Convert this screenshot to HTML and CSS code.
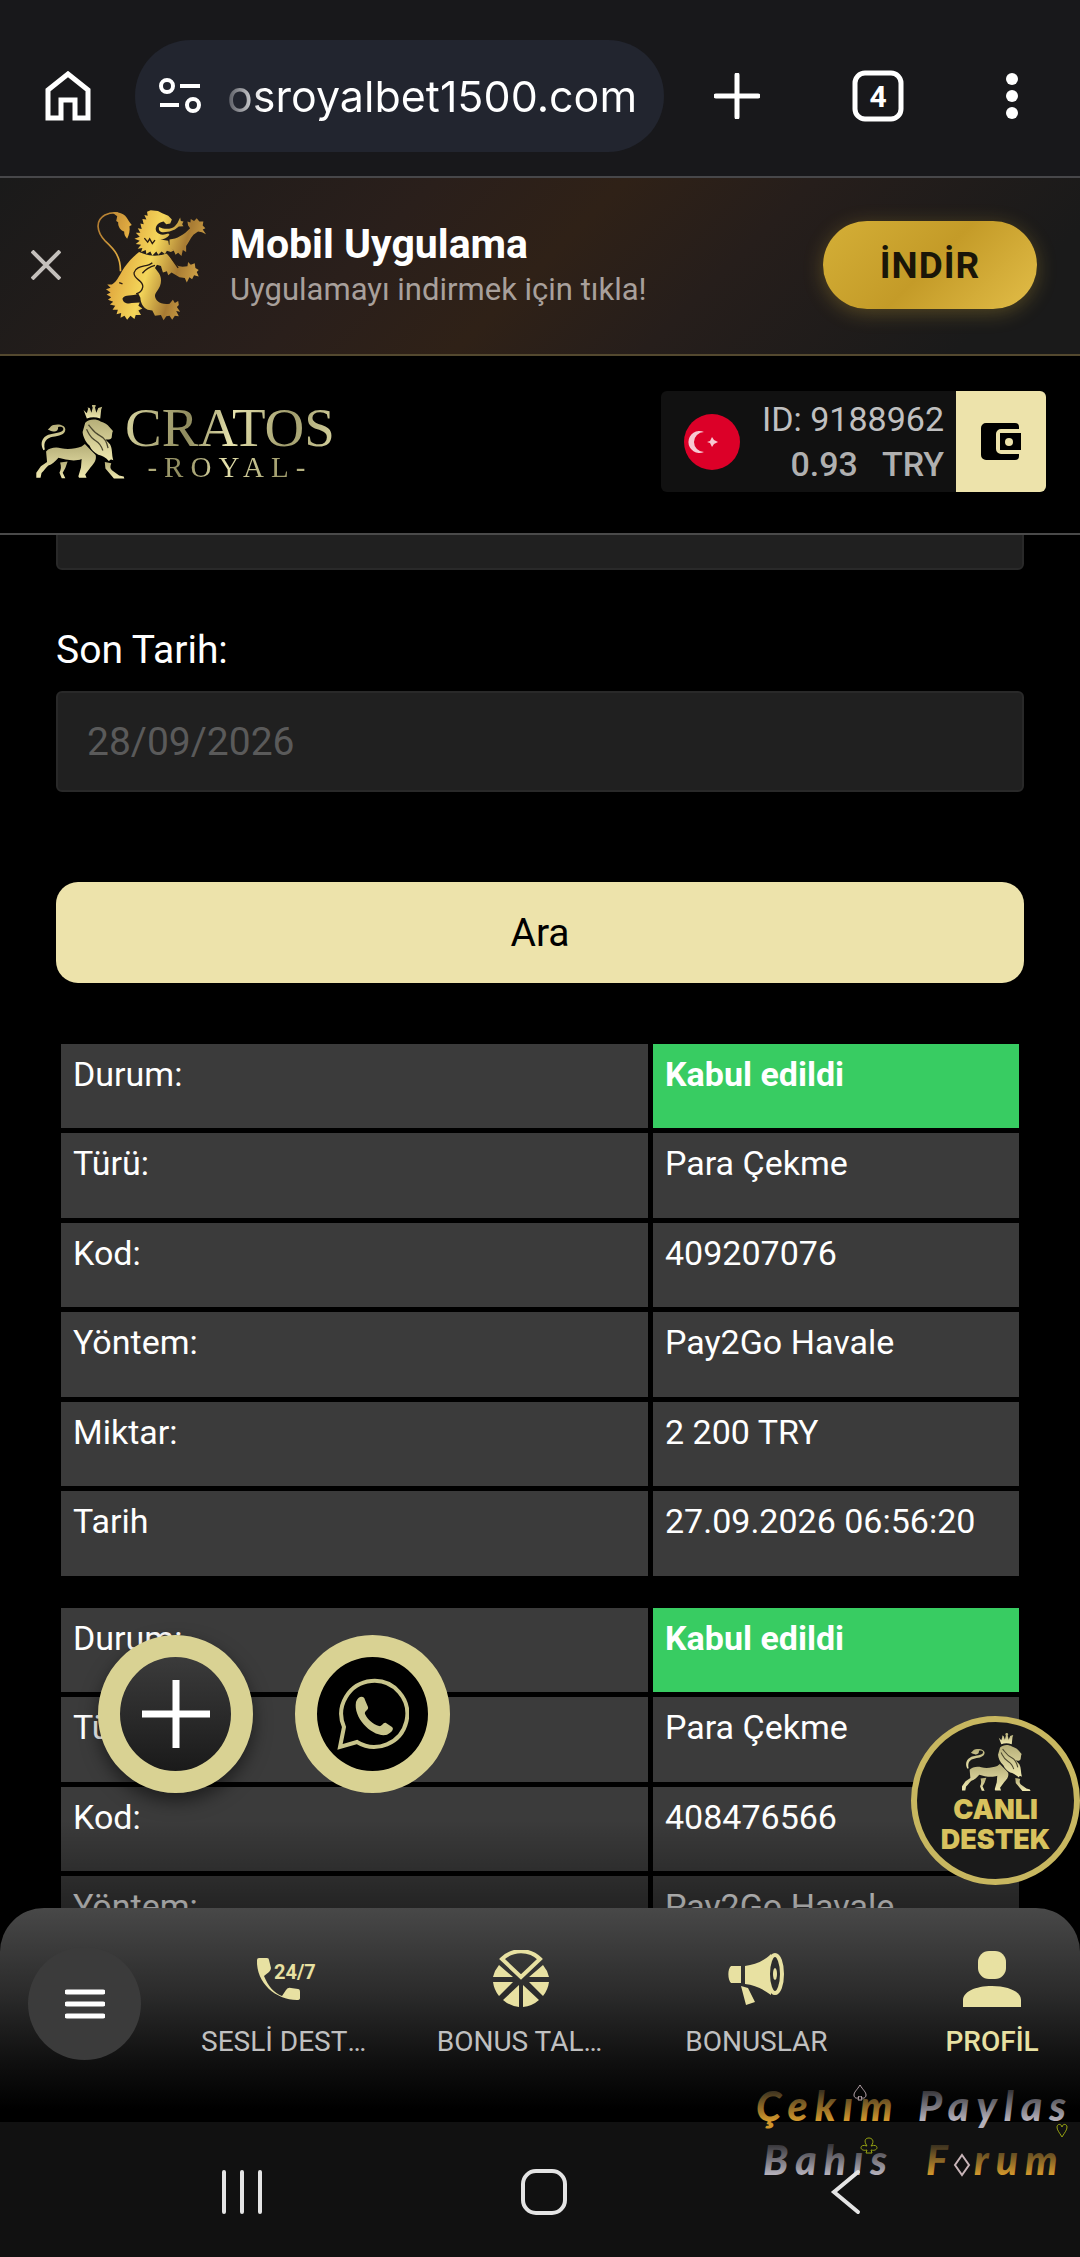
FILE: index.html
```html
<!DOCTYPE html>
<html lang="tr">
<head>
    <meta charset="UTF-8">
    <meta name="viewport" content="width=device-width, initial-scale=1.0">
    <title>Cratos Royal</title>
    <link rel="stylesheet" href="styles.css">
</head>
<body>

<!-- shared drawings -->
<svg width="0" height="0" class="defs" aria-hidden="true">
    <defs>
        <linearGradient id="gold" gradientUnits="userSpaceOnUse" x1="20" y1="60" x2="350" y2="160">
            <stop offset="0" stop-color="#b07a30"/>
            <stop offset="0.3" stop-color="#e3ae42"/>
            <stop offset="0.55" stop-color="#f4d65a"/>
            <stop offset="0.8" stop-color="#a87b33"/>
            <stop offset="1" stop-color="#d3a548"/>
        </linearGradient>
        <linearGradient id="cream" x1="0" y1="0" x2="0" y2="1">
            <stop offset="0" stop-color="#b5ae78"/>
            <stop offset="1" stop-color="#f0e9b0"/>
        </linearGradient>
        <linearGradient id="wmGold" x1="0" y1="0" x2="0" y2="1">
            <stop offset="0.2" stop-color="#3a3120"/>
            <stop offset="0.8" stop-color="#d0962c"/>
        </linearGradient>
        <linearGradient id="wmSilver" x1="0" y1="0" x2="0" y2="1">
            <stop offset="0.2" stop-color="#37363a"/>
            <stop offset="0.8" stop-color="#b4b0ba"/>
        </linearGradient>
    </defs>
    <symbol id="walkingLion" viewBox="14 22 276 226">
        <path d="M163 37l10 10 4-14-2-4 7 2 5 14 4-16c-4-5-2-10 3-11 6 1 8 6 4 11l4 16 6-14 5-2 7-2-3 8-3 28c-14-5-28-5-41 0z"/>
        <path d="M168 76c12-12 33-13 47-4 12 4 22 9 27 17l11 12-2 6-2 15c-4 7-12 6-19 5l14 15c8 14 5 31 10 49-8-6-12 0-13 3-11-13-22-17-33-20-14-7-21-15-27-28-14-14-20-30-21-42z"/>
        <path d="M40 160c-9-15-8-34 9-44 15-9 40-6 51-17 4-9-5-13-15-10 1 10-6 15-14 14-7 0-13-4-18-6 7-4 9-13 18-14 15-4 34-1 36 13 0 17-21 21-38 23-20 4-30 15-25 39z"/>
        <path d="M48 164c10-12 31-14 46-10 22 5 45 1 63-5l10-8c13 15 25 24 33 34 3 13-2 23-16 38l-16 22 4 10h-23l-2-5 8-27 2-26c-13 6-32 5-49 2l-22-6c-11 13-20 20-31 24-8 6-12 15-21 23l-3 15H18v-16l14-20 19-13z"/>
        <path d="M91 198l23-3-7 20-8 14 8 17H96l-7-17c5-10 6-18 2-31zM228 196l20 4c-4 10-4 15 2 22l22 16 14 3 2 6h-32l-26-31z"/>
        <path d="M172 96c8 15 10 25 28 35 12 7 18 17 22 30M178 82c12 14 16 25 36 34 16 7 20 21 24 38" fill="none" stroke="#4b472f" stroke-width="4"/>
    </symbol>
</svg>

<header class="browser-bar">
    <button class="icon-button" aria-label="Ana sayfa">
        <svg width="46" height="50" viewBox="0 0 46 50"><path d="M3 19L23 3l20 16v28H30V29H16v18H3z" fill="none" stroke="#fff" stroke-width="5"/></svg>
    </button>
    <button class="url-pill">
        <svg width="42" height="38" viewBox="0 0 42 38" fill="none" stroke="#fff" stroke-width="4"><circle cx="8" cy="9" r="6"/><path d="M21 9h20M1 28h19"/><circle cx="34" cy="28" r="6"/></svg>
        <span class="url-text">osroyalbet1500.com</span>
    </button>
    <div class="browser-actions">
        <button class="icon-button" aria-label="Yeni sekme">
            <svg width="46" height="46" viewBox="0 0 46 46"><path d="M23 2v42M2 23h42" stroke="#fff" stroke-width="5" stroke-linecap="round"/></svg>
        </button>
        <button class="icon-button" aria-label="Sekmeler">
            <svg width="52" height="52" viewBox="0 0 52 52"><rect x="3" y="3" width="46" height="46" rx="10" fill="none" stroke="#fff" stroke-width="5"/><text class="tab-count" x="26" y="37" text-anchor="middle">4</text></svg>
        </button>
        <button class="icon-button menu-dots" aria-label="Menü">
            <svg width="12" height="46" viewBox="0 0 12 46" fill="#fff"><circle cx="6" cy="6" r="6"/><circle cx="6" cy="23" r="6"/><circle cx="6" cy="40" r="6"/></svg>
        </button>
    </div>
</header>

<section class="app-banner">
    <button class="icon-button" aria-label="Kapat">
        <svg width="30" height="30" viewBox="0 0 30 30"><path d="M1 1l28 28M29 1L1 29" stroke="#c4c0bc" stroke-width="4"/></svg>
    </button>
    <svg class="banner-lion" viewBox="15 22 338 338" fill="url(#gold)">
        <!-- tail -->
        <path d="M92 210C92 165 74 145 47 120 18 90 16 56 45 40 58 34 70 32 84 34" fill="none" stroke="url(#gold)" stroke-width="5"/>
        <path d="M68 33C82 30 96 34 106 42 114 50 118 62 126 70L119 74C121 88 118 100 112 112 106 104 103 100 103 90 92 86 84 76 85 62L79 58 82 44z"/>
        <!-- mane and head -->
        <path d="M172 30L183 26 205 28 218 35 236 42 247 54 242 66 230 68 222 60C205 62 194 76 200 90 206 100 222 102 236 96L240 100C234 110 222 114 212 114L236 118 238 130 248 132 246 142 256 146 244 152 232 148 226 158 216 150 206 160 200 150 188 162 182 150 170 158 168 146 154 152 158 140 144 142 154 130 138 128 150 118 134 112 150 106 138 94 152 94 144 80 156 82 152 66 162 68 158 52 170 54 164 40 174 42z"/>
        <path d="M208 76C224 84 244 84 256 74L264 64 272 48 274 58 282 60 278 68 282 74 268 75 256 84 240 90 222 92C212 92 206 86 208 76z"/>
        <!-- upper arm -->
        <path d="M240 114C262 112 284 100 302 80L296 72 294 60 303 63 304 52 314 58 322 50 330 60 342 60 340 72 348 80 340 84 350 98 338 92 326 90 312 100C302 112 296 126 290 134L290 152 280 146 276 164 266 154 258 160 252 146 240 140z"/>
        <!-- trunk, lower arm and legs -->
        <path d="M148 152C176 165 206 166 230 156 244 166 250 182 262 192 272 198 284 196 294 195L296 182 304 190 316 186 318 200 328 206 322 212 328 226 314 222 308 234 300 228 292 244 286 230 270 228 246 214 236 222 232 210 220 214 214 194 202 190 196 200 208 216C218 232 216 252 202 270 194 280 194 288 202 298 212 308 226 310 240 308L250 296 256 306 266 300 268 312 262 318 272 332 260 330 268 346 256 344 248 356 240 344 230 346 222 358 214 342 196 344 188 328 174 326C160 320 152 304 152 290L146 278C128 286 104 280 98 292 98 304 112 310 126 306L150 304 146 314 158 322 146 328 154 342 138 342 134 354 122 344 112 356 104 344 92 350 94 336 80 340 84 326 68 326 76 314 60 310 70 302 54 296 64 288 50 280 62 274 48 264 62 260 52 250 66 250C84 240 92 214 104 198 118 178 130 166 148 152z"/>
        <path d="M188 184c-14 14-48 6-55 30-3 22 30 22 26 44-2 12-12 18-20 20M196 192c-16 4-30 14-38 24M238 160l28 40M164 110l10 12 6-10 8 14 8-10M88 244l10 4" fill="none" stroke="#2a1c12" stroke-width="4"/>
    </svg>
    <div class="banner-text">
        <strong>Mobil Uygulama</strong>
        <span>Uygulamayı indirmek için tıkla!</span>
    </div>
    <button class="download-button">İNDİR</button>
</section>

<section class="site-header">
    <a href="#" class="logo">
        <svg class="logo-lion" fill="url(#cream)"><use href="#walkingLion"/></svg>
        <span class="logo-text">
            <span class="logo-name">CRATOS</span>
            <span class="logo-sub">-ROYAL-</span>
        </span>
    </a>
    <div class="account">
        <svg width="56" height="56" viewBox="0 0 56 56"><circle cx="28" cy="28" r="28" fill="#dc0028"/><path d="M20 18a11 11 0 1 0 0 20 10 10 0 1 1 0-20z" fill="#f7c9d2"/><path d="M28 23l2 3 4 2-4 2-2 3-2-4-3-1 3-1z" fill="#f7c9d2"/></svg>
        <div class="account-info">
            <span>ID: 9188962</span>
            <span class="balance"><span>0.93</span><span>TRY</span></span>
        </div>
        <button class="wallet" aria-label="Cüzdan">
            <svg width="40" height="38" viewBox="0 0 40 38"><path d="M5 0h29a4 4 0 0 1 4 4v2H20a5 5 0 0 0-5 5v15a5 5 0 0 0 5 5h18v2a4 4 0 0 1-4 4H5a5 5 0 0 1-5-5V5a5 5 0 0 1 5-5z"/><path d="M19 10h21v17H19z"/><circle cx="28" cy="19" r="4" fill="#ede3ab"/></svg>
        </button>
    </div>
</section>

<main class="content">
    <form class="filter">
        <input type="text" class="first-field" aria-label="Başlangıç Tarihi">
        <label for="endDate">Son Tarih:</label>
        <input type="text" id="endDate" value="28/09/2026">
        <button type="button">Ara</button>
    </form>

    <table class="transaction">
        <tr><td>Durum:</td><td class="accepted">Kabul edildi</td></tr>
        <tr><td>Türü:</td><td>Para Çekme</td></tr>
        <tr><td>Kod:</td><td>409207076</td></tr>
        <tr><td>Yöntem:</td><td>Pay2Go Havale</td></tr>
        <tr><td>Miktar:</td><td>2 200 TRY</td></tr>
        <tr><td>Tarih</td><td>27.09.2026 06:56:20</td></tr>
    </table>

    <table class="transaction">
        <tr><td>Durum:</td><td class="accepted">Kabul edildi</td></tr>
        <tr><td>Türü:</td><td>Para Çekme</td></tr>
        <tr><td>Kod:</td><td>408476566</td></tr>
        <tr><td>Yöntem:</td><td>Pay2Go Havale</td></tr>
    </table>

    <div class="fade"></div>

    <div class="floating">
        <button class="fab fab-plus" aria-label="Ekle">
            <svg width="68" height="68" viewBox="0 0 68 68"><path d="M34 0v68M0 34h68" stroke="#fff" stroke-width="7"/></svg>
        </button>
        <button class="fab fab-whatsapp" aria-label="WhatsApp">
            <svg width="72" height="72" viewBox="0 0 72 72"><path d="M3 69l4-20a33 33 0 1 1 13 15z" fill="none" stroke="#c9c58c" stroke-width="4"/><path d="M19 24c2-6 8-7 9-2l3 7c1 3-4 4-3 7 3 6 8 10 14 12 3 1 4-4 7-3l6 4c3 2-2 7-6 8C35 59 16 40 19 24z" fill="#c9c58c"/></svg>
        </button>
    </div>

    <button class="live-support">
        <svg class="support-lion" fill="url(#cream)"><use href="#walkingLion"/></svg>
        <span>CANLI</span>
        <span>DESTEK</span>
    </button>
</main>

<nav class="tab-bar">
    <button class="menu-button" aria-label="Menü">
        <svg width="40" height="30" viewBox="0 0 40 30"><path d="M2 3h36M2 15h36M2 27h36" stroke="#fff" stroke-width="5" stroke-linecap="round"/></svg>
    </button>
    <div class="tabs">
        <a href="#">
            <svg width="66" height="58" viewBox="-4 0 66 58" fill="#e8e1a2"><path d="M1 10q0-2 2-2h8q2 0 2 2l2 8q0 2-2 4l-5 4c4 10 10 17 18 20l4-6q2-3 5-2l7 1q2 0 2 3v6q0 2-3 2C20 50 0 33 1 10z"/><text class="phone-hours" x="18" y="29">24/7</text></svg>
            <span>SESLİ DESTEK</span>
        </a>
        <a href="#">
            <svg width="58" height="58" viewBox="0 0 58 58" fill="#e8e1a2">
                <path d="M10 9a27 27 0 0 1 38 0L29 27z" fill="none" stroke="#e8e1a2" stroke-width="4"/>
                <path d="M7 15l14 12H1a28 28 0 0 1 6-12zM51 15L37 27h20a28 28 0 0 0-6-12zM1 32h20L7 46A28 28 0 0 1 1 32zM57 32H37l14 14a28 28 0 0 0 6-14zM27 35v22a28 28 0 0 1-16-7zM31 35v22a28 28 0 0 0 16-7z"/>
            </svg>
            <span>BONUS TALEP</span>
        </a>
        <a href="#">
            <svg width="58" height="58" viewBox="0 0 58 58" fill="#e8e1a2"><path d="M4 16h10v17H4c-3-3-4-13 0-17zM18 16c10-1 19-5 26-12v41c-8-6-16-10-26-11zM14 36l7 2 7 14-9 3z"/><ellipse cx="48" cy="24" rx="7" ry="19" fill="#2d2d2d" stroke="#e8e1a2" stroke-width="4"/><ellipse cx="48" cy="24" rx="2" ry="6"/></svg>
            <span>BONUSLAR</span>
        </a>
        <a href="#" class="active">
            <svg width="58" height="58" viewBox="0 0 58 58" fill="#e8e1a2"><rect x="15" y="1" width="28" height="28" rx="11"/><path d="M0 57V50c0-8 12-14 29-14s29 6 29 14v7z"/></svg>
            <span>PROFİL</span>
        </a>
    </div>
</nav>

<footer class="system-nav">
    <svg class="watermark" width="340" height="150" viewBox="0 0 340 150">
        <text x="16" y="51" fill="url(#wmGold)">Çekım</text>
        <text x="178" y="51" fill="url(#wmSilver)">Paylas</text>
        <text x="23" y="105" fill="url(#wmSilver)">Bahıs</text>
        <text x="186" y="105" fill="url(#wmGold)">F</text>
        <text x="234" y="105" fill="url(#wmGold)">rum</text>
        <g fill="none" stroke-width="1">
            <path d="M120 15c-3 5-6 7-6 10 0 4 5 4 5 1l-1 4h4l-1-4c0 3 5 3 5-1 0-3-3-5-6-10z" stroke="#b9a6ac"/>
            <path d="M127 76c-4-6-1-8 2-8s6 3 2 8c8-3 8 6 0 4l1 3h-6l1-3c-8 2-8-7 0-4z" stroke="#97a312"/>
            <path d="M322 67c-3-5-5-7-5-10s4-4 5 0c1-4 5-3 5 0s-2 5-5 10z" stroke="#97a312"/>
            <path d="M222 85l7 10-7 10-7-10z" stroke="#c8b4b8" stroke-width="2"/>
        </g>
    </svg>
    <button aria-label="Son uygulamalar"><svg width="44" height="44" viewBox="0 0 44 44"><path d="M4 2v40M22 2v40M40 2v40" stroke="#e4e4e4" stroke-width="4" stroke-linecap="round"/></svg></button>
    <button aria-label="Ana ekran"><svg width="46" height="46" viewBox="0 0 46 46"><rect x="2" y="2" width="42" height="42" rx="13" fill="none" stroke="#e4e4e4" stroke-width="4"/></svg></button>
    <button aria-label="Geri"><svg width="38" height="46" viewBox="0 0 38 46"><path d="M35 3L11 23l24 20" fill="none" stroke="#e4e4e4" stroke-width="4" stroke-linecap="round"/></svg></button>
</footer>

</body>
</html>
```
FILE: styles.css
```css
* {
    box-sizing: border-box;
}

body {
    margin: 0;
    height: 100vh;
    display: flex;
    flex-direction: column;
    overflow: hidden;
    background-color: #111;
    color: #fff;
    font-family: Roboto, "Liberation Sans", sans-serif;
    font-size: 34px;
}

button {
    margin: 0;
    padding: 0;
    border: none;
    background: none;
    color: inherit;
    font-family: inherit;
    cursor: pointer;
}

svg {
    display: block;
    flex: none;
}

.defs {
    position: absolute;
}

/* browser */
.browser-bar {
    display: flex;
    align-items: center;
    padding: 40px 62px 24px 45px;
    background-color: #18181b;
    border-bottom: 2px solid #47474a;
}

.url-pill {
    display: flex;
    align-items: center;
    gap: 26px;
    flex: 1;
    height: 112px;
    margin-left: 44px;
    padding: 0 24px;
    border-radius: 56px;
    background-color: #22252f;
    overflow: hidden;
}

.url-text {
    font-family: Inter, Roboto, sans-serif;
    font-size: 43px;
    background: linear-gradient(90deg, #55575f, #fff 36px);
    -webkit-background-clip: text;
    background-clip: text;
    color: transparent;
}

.browser-actions {
    display: flex;
    align-items: center;
    gap: 92px;
    margin-left: 50px;
}

.menu-dots {
    margin-left: 10px;
}

.tab-count {
    font-size: 30px;
    font-weight: 700;
    fill: #fff;
}

/* app banner */
.app-banner {
    display: flex;
    align-items: center;
    padding: 30px 43px 32px 31px;
    background: linear-gradient(135deg, #1a1a1a 0%, #2a1f1b 35%, #2f2117 50%, #261e1b 65%, #1a1a1a 90%);
    border-bottom: 2px solid #54492f;
}

.banner-lion {
    width: 112px;
    height: 114px;
    margin-left: 34px;
}

.banner-text {
    display: flex;
    flex-direction: column;
    gap: 2px;
    flex: 1;
    margin-left: 23px;
}

.banner-text strong {
    font-size: 41px;
    line-height: 48px;
}

.banner-text span {
    font-size: 31px;
    line-height: 40px;
    color: #a8a09c;
}

.download-button {
    width: 214px;
    height: 88px;
    border-radius: 44px;
    background: linear-gradient(135deg, #d4af37, #c49b28 50%, #e2bd48);
    box-shadow: 0 4px 20px rgba(212, 175, 55, 0.3);
    color: #1a1608;
    font-size: 37px;
    font-weight: 700;
    letter-spacing: 1px;
}

/* site header */
.site-header {
    display: flex;
    align-items: center;
    justify-content: space-between;
    height: 179px;
    padding: 0 34px 6px 35px;
    background-color: #000;
    border-bottom: 2px solid #4a4a4a;
}

.logo {
    display: flex;
    align-items: center;
    text-decoration: none;
}

.logo-lion {
    width: 90px;
    height: 74px;
}

.logo-text {
    display: flex;
    flex-direction: column;
    align-items: center;
    font-family: "Liberation Serif", serif;
    background: linear-gradient(100deg, #d9d5a0, #8f8b5e 30%, #e6e2ad 50%, #a09c6c 75%, #dcd8a4);
    -webkit-background-clip: text;
    background-clip: text;
    color: transparent;
}

.logo-name {
    font-size: 55px;
    line-height: 50px;
}

.logo-sub {
    font-size: 29px;
    line-height: 28px;
    letter-spacing: 7px;
}

.account {
    display: flex;
    align-items: center;
    height: 101px;
    padding-left: 23px;
    border-radius: 6px;
    background-color: #111;
    overflow: hidden;
}

.account-info {
    display: flex;
    flex-direction: column;
    align-items: flex-end;
    margin: 0 12px 0 22px;
    line-height: 45px;
    color: #c0c0c0;
}

.balance {
    display: flex;
    gap: 24px;
    font-weight: 500;
    color: #b0b0b0;
}

.wallet {
    display: flex;
    align-items: center;
    justify-content: center;
    width: 90px;
    height: 100%;
    background-color: #ede3ab;
}

/* transactions page */
.content {
    position: relative;
    flex: 1;
    min-height: 0;
    padding: 0 56px;
    background-color: #000;
    overflow: hidden;
}

.filter {
    display: flex;
    flex-direction: column;
    font-size: 39px;
}

.filter input {
    width: 100%;
    height: 101px;
    padding: 0 29px;
    border: 2px solid #292929;
    border-radius: 6px;
    background-color: #202020;
    color: #5a5a5a;
    font-family: inherit;
    font-size: 39px;
}

.filter .first-field {
    margin-top: -66px;
}

.filter label {
    margin: 56px 0 17px;
    line-height: 48px;
}

.filter button {
    height: 101px;
    margin: 90px 0 56px;
    border-radius: 22px;
    background-color: #ede3ab;
    color: #000;
    font-size: 39px;
}

.transaction {
    width: 100%;
    margin-bottom: 22px;
    border-spacing: 5px;
    table-layout: fixed;
}

.transaction td {
    height: 84px;
    padding: 10px 12px;
    background-color: #3b3b3b;
    line-height: 40px;
    vertical-align: top;
}

.transaction tr:nth-child(even) td {
    height: 85px;
}

.transaction td:last-child {
    width: 366px;
}

.transaction .accepted {
    background-color: #38cc62;
    font-weight: 700;
}

.fade {
    position: absolute;
    left: 0;
    right: 0;
    bottom: 0;
    height: 132px;
    background: linear-gradient(rgba(0, 0, 0, 0), rgba(0, 0, 0, 0.6));
}

.floating {
    position: absolute;
    left: 98px;
    bottom: 159px;
    display: flex;
    gap: 42px;
}

.fab {
    display: flex;
    align-items: center;
    justify-content: center;
    width: 155px;
    height: 158px;
    border: 22px solid #d9d293;
    border-radius: 50%;
}

.fab-plus {
    background: linear-gradient(#3b3b3b, #1a1a1a);
    box-shadow: 0 8px 18px rgba(0, 0, 0, 0.5);
}

.fab-whatsapp {
    background-color: #000;
}

.live-support {
    position: absolute;
    right: 0;
    bottom: 67px;
    display: flex;
    flex-direction: column;
    align-items: center;
    width: 169px;
    height: 169px;
    padding-top: 11px;
    border: 6px solid #c8b760;
    border-radius: 50%;
    background-color: #1a1a1a;
    color: #d8c25e;
    font-family: Inter, sans-serif;
    font-size: 27px;
    font-weight: 900;
    line-height: 30px;
}

.support-lion {
    width: 70px;
    height: 59px;
    margin-bottom: 3px;
}

/* bottom tabs */
.tab-bar {
    position: relative;
    display: flex;
    align-items: flex-start;
    height: 214px;
    margin-top: -44px;
    padding: 39px 4px 0 28px;
    border-radius: 44px 44px 0 0;
    background: linear-gradient(#484848, #2b2b2b 40%, #111 70%, #000 94%);
}

.menu-button {
    display: flex;
    align-items: center;
    justify-content: center;
    width: 113px;
    height: 113px;
    border-radius: 50%;
    background-color: #3b3b3b;
}

.tabs {
    display: grid;
    grid-template-columns: repeat(4, 1fr);
    gap: 68px;
    flex: 1;
    margin-left: 60px;
}

.tabs a {
    display: flex;
    flex-direction: column;
    align-items: center;
    gap: 16px;
    min-width: 0;
    padding-top: 3px;
    color: #c0c0c0;
    font-size: 28px;
    line-height: 36px;
    text-decoration: none;
}

.tabs span {
    max-width: 100%;
    overflow: hidden;
    text-overflow: ellipsis;
    white-space: nowrap;
}

.tabs .active {
    color: #e8e1a2;
    font-weight: 500;
}

.phone-hours {
    font-size: 20px;
    font-weight: 700;
}

/* android navigation */
.system-nav {
    position: relative;
    display: flex;
    align-items: center;
    justify-content: space-between;
    height: 135px;
    padding: 4px 219px 0 220px;
}

.system-nav button {
    position: relative;
}

.watermark {
    position: absolute;
    right: 0;
    bottom: 37px;
    font-family: Lato, sans-serif;
    font-size: 41px;
    font-style: italic;
    font-weight: 900;
    letter-spacing: 7px;
}
```
